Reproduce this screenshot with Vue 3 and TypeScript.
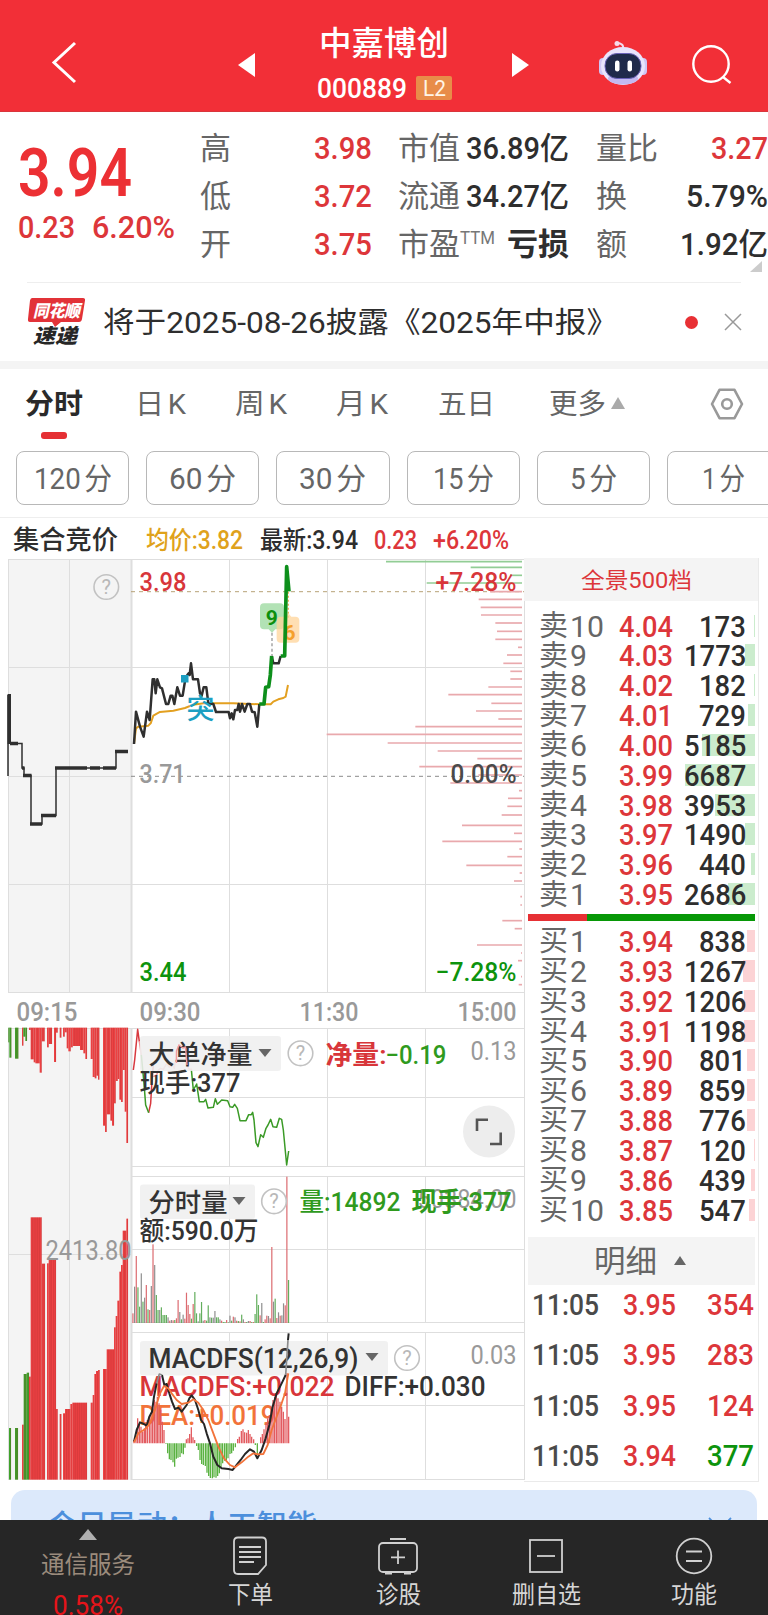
<script setup lang="ts">
import { h, type FunctionalComponent } from 'vue'

// Single-line label scaled to an exact advance width; colour comes from the parent.
const Fit: FunctionalComponent<{ t: string; w: number; s: number; b?: number }> = (p) =>
  h('svg', { width: p.w, height: p.s, style: 'display:block;overflow:visible;flex:none' }, [
    h('text', {
      x: 0, y: p.s * 0.86, textLength: p.w, lengthAdjust: 'spacingAndGlyphs',
      'font-size': p.s, 'font-weight': p.b ?? 400, fill: 'currentColor',
    }, p.t),
  ])
Fit.props = ['t', 'w', 's', 'b']

interface Cell { l: string; lw: number; sup?: string; v: string; vw: number; c: string; b?: number }
const quote: Cell[][] = [
  [
    { l: '高', lw: 31, v: '3.98', vw: 58, c: 'red' },
    { l: '低', lw: 31, v: '3.72', vw: 58, c: 'red' },
    { l: '开', lw: 31, v: '3.75', vw: 58, c: 'red' },
  ],
  [
    { l: '市值', lw: 62, v: '36.89亿', vw: 103, c: 'ink' },
    { l: '流通', lw: 62, v: '34.27亿', vw: 103, c: 'ink' },
    { l: '市盈', lw: 62, sup: 'TTM', v: '亏损', vw: 62, c: 'ink', b: 600 },
  ],
  [
    { l: '量比', lw: 62, v: '3.27', vw: 57, c: 'red' },
    { l: '换', lw: 31, v: '5.79%', vw: 82, c: 'ink' },
    { l: '额', lw: 31, v: '1.92亿', vw: 88, c: 'ink' },
  ],
]

const tabs = [
  { t: '分时', w: 58 }, { t: '日K', w: 51 }, { t: '周K', w: 52 },
  { t: '月K', w: 52 }, { t: '五日', w: 57 }, { t: '更多', w: 57 },
]
const periods = [
  { t: '120分', w: 78 }, { t: '60分', w: 67 }, { t: '30分', w: 67 },
  { t: '15分', w: 61 }, { t: '5分', w: 47 }, { t: '1分', w: 43 },
]

type Level = [string, string, string, number]
const asks: Level[] = [
  ['10', '4.04', '173', 1], ['9', '4.03', '1773', 10], ['8', '4.02', '182', 1], ['7', '4.01', '729', 7],
  ['6', '4.00', '5185', 53], ['5', '3.99', '6687', 70], ['4', '3.98', '3953', 40], ['3', '3.97', '1490', 10],
  ['2', '3.96', '440', 4], ['1', '3.95', '2686', 27],
]
const bids: Level[] = [
  ['1', '3.94', '838', 8], ['2', '3.93', '1267', 12], ['3', '3.92', '1206', 11], ['4', '3.91', '1198', 11],
  ['5', '3.90', '801', 8], ['6', '3.89', '859', 8], ['7', '3.88', '776', 8], ['8', '3.87', '120', 1],
  ['9', '3.86', '439', 4], ['10', '3.85', '547', 6],
]
const trades = [['3.95', '354', 'red'], ['3.95', '283', 'red'], ['3.95', '124', 'red'], ['3.94', '377', 'green']]

// Price distribution: [y, left]; every bar ends on the right edge.
const profile: [number, number][] = [
  [35, 378], [52, 632], [76, 750], [99, 500], [125, 690], [148, 656], [172, 662], [195, 663], [219, 706],
  [244, 711], [268, 706], [292, 774], [315, 741], [340, 730], [364, 751], [387, 751], [411, 685], [434, 565],
  [460, 694], [483, 648], [507, 715], [530, 466], [553, 200], [579, 383], [603, 533], [626, 652], [650, 478],
  [675, 655], [699, 571], [722, 777], [745, 744], [769, 742], [795, 725], [826, 606], [850, 762], [874, 547],
  [897, 778], [920, 742], [946, 619], [969, 779], [993, 762], [1040, 781], [1065, 781], [1112, 727],
  [1136, 764], [1185, 651], [1209, 783], [1232, 774], [1280, 783], [1304, 776],
]

type Range = [number, number, number, string]
const R = '#ee4244'
const G = '#3fa22c'
const hangBars: Range[] = [
  [25, 28, 187, G], [28, 34, 233, G], [45, 55, 236, G], [66, 70, 197, R], [70, 76, 170, G], [76, 81, 183, G],
  [87, 92, 150, R], [92, 101, 238, R], [101, 106, 247, R], [106, 119, 250, R], [119, 125, 278, R],
  [125, 134, 184, R], [141, 146, 202, R], [146, 156, 192, R], [162, 168, 246, R], [168, 173, 158, R],
  [179, 184, 173, R], [189, 194, 170, R], [194, 200, 157, R], [200, 205, 205, R], [205, 212, 214, R],
  [212, 218, 202, R], [218, 240, 198, R], [240, 250, 210, R], [250, 256, 220, R], [256, 261, 237, R],
  [272, 278, 237, R], [278, 284, 291, R], [284, 289, 295, R], [289, 294, 287, R], [294, 298, 299, R],
  [309, 315, 437, R], [315, 320, 456, R], [320, 331, 403, R], [331, 336, 422, R], [336, 342, 437, R],
  [342, 347, 370, R], [347, 353, 303, R], [353, 358, 297, R], [358, 363, 359, R], [363, 368, 366, R],
  [368, 374, 270, R], [374, 379, 395, R], [379, 384, 489, R],
]
const riseBars: Range[] = [
  [27, 33, 594, G], [45, 54, 594, G], [66, 71, 584, R], [71, 80, 432, G], [80, 87, 428, G], [87, 92, 440, R],
  [92, 125, -38, R], [125, 135, 101, R], [141, 146, 100, R], [146, 156, 90, R], [156, 168, 90, R], [168, 173, 537, R],
  [179, 184, 552, R], [189, 195, 550, R], [195, 211, 537, R], [211, 217, 522, R], [217, 261, 518, R],
  [272, 278, 518, R], [278, 283, 495, R], [283, 288, 432, R], [288, 294, 423, R], [294, 299, 420, R],
  [309, 320, 417, R], [320, 342, 358, R], [342, 347, 292, R], [347, 352, 258, R], [352, 358, 212, R],
  [358, 363, 125, R], [363, 368, 105, R], [368, 379, 2, R], [379, 384, -34, R],
]
// Edges drawn between neighbouring columns of one range.
const seams = (b: Range): number[] => {
  const n = Math.max(1, Math.round((b[1] - b[0]) / 5.3))
  return Array.from({ length: n }, (_, i) => b[0] + ((i + 1) * (b[1] - b[0])) / n)
}

const volTops = [
  '250r', '170k', '78r', '172g', '230g', '130k', '215g', '203k', '165r', '238g', '240r', '168k', '43r', '105k',
  '195g', '240g', '240k', '232g', '255g', '255g', '255g', '262k', '272r', '270k', '271r', '270g', '265r', '210r',
  '246k', '268g', '254k', '266r', '188r', '225r', '252r', '266g', '222r', '186g', '250g', '274k', '250g', '216g',
  '272k', '270r', '272g', '226g', '262k', '263g', '263k', '243k', '262g', '262g', '268k', '272r', '276g', '276g',
  '270r', '277g', '257k', '272g', '260r', '262k', '272r', '273g', '274r', '254g', '268k', '276r', '276g', '273k',
  '273r', '276g', '276r', '252g', '193g', '225g', '256r', '219k', '276g', '268r', '257r', '258k', '265r', '51r',
  '215k', '206g', '264r', '247k', '257r', '256k', '220k', '226r', '-160r', '150g',
]
const volBars = volTops.map((v, i) => ({ x: 397 + i * 5.02, y: parseInt(v), c: v.slice(-1) }))
const volFill: Record<string, string> = { r: '#dc6b70', g: '#63ae5d', k: '#8f8f8f' }

const macd: [number, number][] = [
  [402, 630], [408, 615], [413, 565], [418, 580], [423, 590], [428, 605], [433, 595], [437, 580], [442, 570],
  [448, 560], [453, 555], [458, 545], [463, 510], [468, 515], [472, 500], [477, 520], [482, 540], [487, 575],
  [492, 600], [498, 642], [503, 670], [508, 688], [513, 690], [519, 697], [524, 710], [529, 686], [534, 683],
  [540, 681], [545, 670], [550, 673], [555, 653], [559, 628], [564, 625], [569, 612], [574, 592], [579, 622],
  [584, 630], [590, 648], [595, 660], [600, 690], [605, 702], [610, 705], [616, 708], [621, 728], [626, 738],
  [631, 744], [637, 745], [642, 742], [648, 743], [653, 738], [658, 730], [663, 712], [668, 700], [674, 692],
  [679, 690], [684, 685], [690, 672], [695, 670], [700, 662], [706, 652], [713, 627], [718, 620], [724, 603],
  [729, 598], [734, 607], [740, 608], [745, 600], [750, 612], [755, 620], [761, 628], [766, 645], [772, 675],
  [782, 622], [787, 612], [792, 598], [798, 580], [803, 565], [808, 555], [813, 530], [819, 510], [824, 500],
  [829, 495], [834, 505], [840, 515], [845, 530], [850, 545], [855, 567], [861, 430], [866, 560],
]

// Chart labels: text, x, baseline, width, size, colour, weight.
type Label = [string, number, number, number, number, string, number]
const labels: Label[] = [
  ['3.98', 139, 590, 47, 26, '#d8363a', 500],
  ['+7.28%', 435, 590, 81, 26, '#d8363a', 500],
  ['3.71', 139, 782, 46, 26, '#999', 500],
  ['0.00%', 450, 782, 66, 26, '#4a4a4a', 500],
  ['3.44', 139, 980, 47, 26, '#0d930d', 500],
  ['−7.28%', 435, 980, 81, 26, '#0d930d', 500],
  ['09:15', 16, 1020.5, 61, 26, '#999', 500],
  ['09:30', 139, 1020.5, 61, 26, '#999', 500],
  ['11:30', 299, 1020.5, 59, 26, '#999', 500],
  ['15:00', 457, 1020.5, 59, 26, '#999', 500],
  ['大单净量', 148, 1063, 104, 26, '#333', 500],
  ['净量:', 325, 1063, 61, 26, '#d8363a', 600],
  ['−0.19', 385, 1063, 61, 26, '#2f9a1d', 500],
  ['0.13', 470, 1059, 46, 26, '#999', 400],
  ['现手:377', 139, 1091, 101, 26, '#333', 500],
  ['分时量', 148, 1211, 79, 26, '#333', 500],
  ['50384.00', 417, 1207, 99, 26, '#999', 400],
  ['量:14892', 299, 1210.5, 101, 26, '#2f9a1d', 500],
  ['现手:377', 411, 1210.5, 100, 26, '#2f9a1d', 600],
  ['额:590.0万', 139, 1239, 119, 26, '#333', 500],
  ['2413.80', 45, 1259.5, 86, 27, '#999', 400],
  ['MACDFS(12,26,9)', 148, 1367.5, 210, 27, '#333', 500],
  ['0.03', 470, 1363, 46, 26, '#999', 400],
  ['MACDFS:+0.022', 139, 1395.5, 195, 27, '#d8363a', 500],
  ['DIFF:+0.030', 344, 1395.5, 141, 27, '#333', 500],
  ['DEA:+0.019', 139, 1424, 136, 27, '#f2733a', 500],
]
const helps = [[106.3, 587], [300.5, 1053.3], [274, 1201.3], [407, 1358]]
const carets = [[265, 1049], [239, 1197], [372, 1353]]
const vlines = [229.5, 327.5, 425.5]
const panels = [[1028.5, 1097.5, 1166.5], [1176.5, 1249.5, 1322.5], [1332.5, 1405.5, 1479.5]]
</script>

<template>
  <div class="page">
    <header class="top">
      <svg class="back" width="28" height="44" viewBox="0 0 28 44"><path d="M25 3 4 22.500 25 42" /></svg>
      <svg class="prev" width="17" height="24" viewBox="0 0 17 24"><path d="M17 0V24L0 12Z" /></svg>
      <div class="title">
        <Fit t="中嘉博创" :w="130" :s="32.5" :b="500" />
        <div class="code">
          <Fit t="000889" :w="90" :s="28" :b="500" />
          <span class="chip"><Fit t="L2" :w="23" :s="22" /></span>
        </div>
      </div>
      <svg class="next" width="17" height="24" viewBox="0 0 17 24"><path d="M0 0V24L17 12Z" /></svg>
      <svg class="robot" width="48" height="46" viewBox="0 0 48 46">
        <path d="M24 9C25 5 22 3 18 3" fill="none" stroke="#f3dcef" stroke-width="2" />
        <circle cx="18" cy="3.500" r="2.500" fill="#f7d9e8" />
        <rect x="0" y="18" width="8" height="17" rx="4" fill="#cfc6f5" />
        <rect x="40" y="18" width="8" height="17" rx="4" fill="#cfc6f5" />
        <ellipse cx="24" cy="26" rx="22" ry="19" fill="#e9e4fc" />
        <ellipse cx="24" cy="38.500" rx="15" ry="6" fill="#c3b9f0" />
        <rect x="6" y="13.500" width="36" height="25" rx="12" fill="#1f2a4a" stroke="#6a62b8" stroke-width="1" />
        <rect x="16" y="20.500" width="4.500" height="11" rx="2.200" fill="#fff" />
        <rect x="28.500" y="20.500" width="4.500" height="11" rx="2.200" fill="#fff" />
      </svg>
      <svg class="search" width="42" height="42" viewBox="0 0 42 42"><circle cx="20" cy="20" r="17.700" /><path d="M32 33 39.500 39" /></svg>
    </header>

    <section class="quote">
      <div class="last red">
        <Fit t="3.94" :w="114" :s="66" :b="600" />
        <div class="delta"><Fit t="0.23" :w="57" :s="32" :b="500" /><Fit t="6.20%" :w="83" :s="32" :b="500" /></div>
      </div>
      <div v-for="(col, i) in quote" :key="i" class="qcol">
        <div v-for="c in col" :key="c.l" class="qrow">
          <span class="grey"><Fit :t="c.l" :w="c.lw" :s="31" /></span>
          <span v-if="c.sup" class="sup"><Fit :t="c.sup" :w="35" :s="18" /></span>
          <span class="qv" :class="c.c"><Fit :t="c.v" :w="c.vw" :s="31" :b="c.b ?? 500" /></span>
        </div>
      </div>
      <i class="corner"></i>
    </section>

    <section class="news">
      <svg width="60" height="50" viewBox="0 0 60 50">
        <path d="M5 1H56Q58.500 1 58 3.500L55 22Q54.500 25 52 25H34L28 30 25 25H3Q0.500 25 1 22L3 3.500Q3.500 1 5 1Z" fill="#e23238" />
        <text x="6" y="20" font-size="17" font-weight="900" font-style="italic" fill="#fff" textLength="47" lengthAdjust="spacingAndGlyphs">同花顺</text>
        <text x="6" y="45.500" font-size="20" font-weight="900" font-style="italic" fill="#262626" textLength="44" lengthAdjust="spacingAndGlyphs">速递</text>
      </svg>
      <span class="headline ink"><Fit t="将于2025-08-26披露《2025年中报》" :w="515" :s="29" /></span>
      <i class="dot"></i>
      <svg width="18" height="18" viewBox="0 0 18 18"><path d="M1 1 17 17M17 1 1 17" stroke="#999" stroke-width="1.500" /></svg>
    </section>

    <nav class="tabs">
      <div v-for="(t, i) in tabs" :key="t.t" class="tab" :class="{ on: i === 0 }">
        <Fit :t="t.t" :w="t.w" :s="28.5" :b="i === 0 ? 600 : 400" />
        <i v-if="i === 0" class="bar"></i>
        <i v-if="i === 5" class="up"></i>
      </div>
      <svg class="gear" width="34" height="32" viewBox="0 0 34 32">
        <path d="M9.500 1.800H24.500L32 16 24.500 30.200H9.500L2 16Z" stroke-linejoin="round" /><circle cx="17" cy="16" r="4.800" />
      </svg>
    </nav>

    <div class="periods">
      <div v-for="p in periods" :key="p.t" class="period"><Fit :t="p.t" :w="p.w" :s="30" /></div>
    </div>

    <div class="info">
      <span class="ink"><Fit t="集合竞价" :w="105" :s="26" :b="500" /></span>
      <span class="gold"><Fit t="均价:3.82" :w="97" :s="25" :b="500" /></span>
      <span class="ink"><Fit t="最新:3.94" :w="98" :s="25" :b="500" /></span>
      <span class="red"><Fit t="0.23" :w="43" :s="25" :b="500" /></span>
      <span class="red"><Fit t="+6.20%" :w="76" :s="25" :b="500" /></span>
    </div>

    <main class="body">
      <svg class="chart" width="528" height="924" viewBox="0 558 528 924">
        <rect x="8" y="559" width="123" height="434" fill="#f4f4f4" />
        <rect x="8" y="1028" width="123" height="452" fill="#f4f4f4" />
        <g stroke="#dedede" stroke-width="1" fill="none">
          <path d="M8 559.500H524.500M8 667.500H524.500M8 776.500H131M8 884.500H524.500M8 992.500H524.500M8.500 559V993M69.500 559V993M524.500 559V1480" />
          <path d="M131.500 559V993M131.500 1028V1480" stroke-width="2" />
          <path d="M8.500 1028V1480M69.500 1028V1480M8 1254.500H131M8 1028.500H131" />
          <path v-for="v in vlines" :key="v" :d="`M${v} 559V993M${v} 1028V1166M${v} 1176V1322M${v} 1332V1480`" />
          <path v-for="p in panels" :key="p[0]" :d="`M131 ${p[0]}H524.500M131 ${p[1]}H524.500M131 ${p[2]}H524.500`" />
        </g>
        <path d="M131 591.700H524" stroke="#b7a277" stroke-dasharray="4 4" />
        <path d="M131 776.300H524" stroke="#8a8a8a" stroke-dasharray="4 4" />

        <g transform="translate(260 550) scale(.33333)">
          <path v-for="(b, i) in profile" :key="b[0]" :d="`M${b[1]} ${b[0]}H786`" stroke-width="5" :stroke="i < 4 ? '#92cd95' : '#e9a9ad'" />
        </g>

        <g fill="none" stroke="#2f2f2f" stroke-width="1.500">
          <path d="M8 776V695M10 743.500H22V768H24V775.500H31V824H42V815.500H56V768H116V751.500H128" />
          <path d="M9.300 694V744M10 743.500H18M22 768H24.500M23 775.500H31.500M30 824H42M41 815.500H56M55 768H87M90 768H100M103 768H116M115 751.500H128" stroke-width="3.400" />
        </g>

        <g transform="translate(0 550) scale(.33333)" fill="none" stroke-linejoin="round">
          <path d="M402 582 408 535 415 530 445 527 452 520 460 497 480 486 520 482 555 474 580 464 610 460H700L780 463H812L820 455 835 448 850 444 857 440 864 405" stroke="#e3a020" stroke-width="6" />
          <path d="M402 582 408 485 420 530 431 560 441 485 449 510 458 388H463L467 430 472 388 480 412 486 415 498 462H505L512 437H517L523 462 532 412 540 437H548L556 387 562 375 566 370 569 375 573 340 579 388H594L600 430 605 437 611 412H619L625 460 640 462 648 486H686L690 505 695 490 700 508 705 480H712L716 462 720 485 726 462 734 485 742 462H750L756 485 764 487 772 530 778 462M815 318 820 340H836L842 318" stroke="#2f2f2f" stroke-width="7.500" />
          <path d="M865 125V205" stroke="#f3b060" stroke-width="4" stroke-dasharray="6 6" />
          <path d="M816 248V318" stroke="#9a9a9a" stroke-width="4" stroke-dasharray="9 7" />
          <path d="M792 160H840Q852 160 852 172V226Q852 238 840 238H826L816 248 806 238H792Q780 238 780 226V172Q780 160 792 160Z" fill="#aadfad" fill-opacity=".9" />
          <path d="M842 200H856L865 190 874 200H886Q898 200 898 212V266Q898 278 886 278H842Q830 278 830 266V212Q830 200 842 200Z" fill="#ffd49a" fill-opacity=".75" />
        </g>
        <text x="265.800" y="625" font-size="21" font-weight="700" fill="#0d8f0d">9</text>
        <text x="283.500" y="639.500" font-size="21" font-weight="700" fill="#f5a02c">6</text>
        <path transform="translate(0 550) scale(.33333)" d="M778 462H792L797 412 806 410 811 375 815 318M842 318H854L860 50 867 124" fill="none" stroke="#0d8f1b" stroke-width="11" stroke-linejoin="round" />
        <rect x="181" y="675" width="7.500" height="7.500" fill="#1c9fc2" />
        <text x="186.500" y="718.500" font-size="28" font-weight="500" fill="#1c9fc2">突</text>

        <g transform="translate(0 980) scale(.33333)">
          <template v-for="b in hangBars" :key="b[0]">
            <rect :x="b[0]" y="143" :width="b[1] - b[0]" :height="b[2] - 143" :fill="b[3]" />
            <path v-for="s in seams(b)" :key="s" :d="`M${s - 0.8} 143V${b[2]}`" stroke="#8a2020" stroke-opacity=".4" stroke-width="1.600" />
          </template>
          <g fill="none" stroke-width="4.500" stroke-linejoin="round">
            <path d="M400 270 404 240 413 148 418 185M446 398 452 370 456 300 460 255" stroke="#d8393f" />
            <path d="M424 225 432 310 437 375 446 398M574 268 580 330 590 312 598 365H612L617 358 624 384 640 382 646 356 652 373 660 365 665 360 683 362 690 380 698 382 704 373 712 385 720 422H738L746 404H754L758 397 762 420 768 488 774 500 782 464 790 472 798 445 804 435 812 418 819 440 830 442 838 415 845 418 850 450 860 555 866 513" stroke="#3a9a26" />
            <path d="M418 185 424 225M460 290 470 285 475 270 482 265 490 268 500 250 508 262 515 250 523 265 530 215 538 195 548 205 556 200 560 255 568 268H576" stroke="#f09a9d" />
          </g>
        </g>

        <g transform="translate(0 1230) scale(.33333)">
          <template v-for="b in riseBars" :key="b[0]">
            <rect :x="b[0]" :y="b[2]" :width="b[1] - b[0]" :height="749 - b[2]" :fill="b[3]" />
            <path v-for="s in seams(b)" :key="s" :d="`M${s - 0.8} ${b[2]}V749`" stroke="#8a2020" stroke-opacity=".4" stroke-width="1.600" />
          </template>
          <rect v-for="v in volBars" :key="v.x" :x="v.x" :y="v.y" width="3.600" :height="279 - v.y" :fill="volFill[v.c]" />
        </g>

        <g fill="#efefef" fill-opacity=".88">
          <rect x="140" y="1036" width="141" height="35" rx="3" />
          <rect x="140" y="1184.500" width="115" height="34.500" rx="3" />
          <rect x="140" y="1341" width="248" height="34.500" rx="3" />
        </g>
        <text v-for="(l, i) in labels" :key="i" :x="l[1] + 0.5" :y="l[2] + 0.5" :textLength="l[3]" lengthAdjust="spacingAndGlyphs" :font-size="l[4]" :fill="l[5]" :font-weight="l[6]">{{ l[0] }}</text>

        <path d="M176.500 1063V1051L179 1045 183 1048 185.500 1047 187 1065" fill="none" stroke="#f09a9d" stroke-width="1.400" />

        <g transform="translate(0 1230) scale(.33333)" fill="none" stroke-linejoin="round">
          <path v-for="m in macd" :key="m[0]" :d="`M${m[0]} 640V${m[1]}`" stroke-width="3.800" :stroke="m[1] < 640 ? '#e2575c' : '#55b03c'" />
          <path d="M402 635 410 600 420 577 428 580 440 587 448 560 456 545 462 500 470 460M486 435 493 465 500 462 508 490 516 515 525 537 535 533 545 545 560 525 568 505 575 496 585 510 595 540 603 570 612 582 620 610 630 640 640 680 652 705 665 715 685 717 698 720 710 705 722 690 735 672 750 658 762 665 772 685 785 660 797 625 808 585 818 530 830 490 845 460 857 435M864 330 866 310" stroke="#262626" stroke-width="6" />
          <path d="M470 460 478 432 486 435M857 435 864 330" stroke="#8c8c8c" stroke-width="5" />
          <path d="M402 637 415 610 435 598 450 580 465 540 480 490 492 468 505 475 515 490 530 510 545 522 565 518 580 508 595 518 610 540 625 570 640 610 655 650 672 685 690 705 705 712 725 697 745 680 760 670 775 673 790 672 803 645 815 600 830 560 845 520 855 490 865 430" stroke="#f2733a" stroke-width="5.500" />
        </g>

        <g v-for="q in helps" :key="q[1]">
          <circle :cx="q[0]" :cy="q[1]" r="12.300" fill="none" stroke="#c2c2c2" stroke-width="1.600" />
          <text :x="q[0]" :y="q[1] + 7" text-anchor="middle" font-size="20" fill="#b8b8b8">?</text>
        </g>
        <path v-for="c in carets" :key="c[1]" :d="`M${c[0] - 6.500} ${c[1]}h13l-6.500 8z`" fill="#666" />
        <circle cx="489" cy="1131.500" r="26" fill="#ededed" />
        <path d="M477 1131V1119.700H488M500.700 1132.500V1144H490" fill="none" stroke="#555" stroke-width="2.600" />
      </svg>

      <aside class="side">
        <div class="depth red"><Fit t="全景500档" :w="111" :s="22" /></div>
        <div class="book asks">
          <div v-for="r in asks" :key="r[1]" class="lvl">
            <i class="vol ask" :style="{ width: r[3] + 'px' }"></i>
            <span class="nm"><Fit t="卖" :w="29" :s="29" /><Fit :t="r[0]" :w="r[0].length * 17" :s="29.8" /></span>
            <span class="px red"><Fit :t="r[1]" :w="54" :s="29.8" :b="500" /></span>
            <span class="qty ink"><Fit :t="r[2]" :w="r[2].length * 15.6" :s="29.8" :b="500" /></span>
          </div>
        </div>
        <div class="ratio"><i></i></div>
        <div class="book bids">
          <div v-for="r in bids" :key="r[1]" class="lvl">
            <i class="vol bid" :style="{ width: r[3] + 'px' }"></i>
            <span class="nm"><Fit t="买" :w="29" :s="29" /><Fit :t="r[0]" :w="r[0].length * 17" :s="29.8" /></span>
            <span class="px red"><Fit :t="r[1]" :w="54" :s="29.8" :b="500" /></span>
            <span class="qty ink"><Fit :t="r[2]" :w="r[2].length * 15.6" :s="29.8" :b="500" /></span>
          </div>
        </div>
        <div class="detail"><Fit t="明细" :w="63" :s="31" /><i class="up dark"></i></div>
        <div v-for="(t, i) in trades" :key="i" class="trade">
          <span class="time"><Fit t="11:05" :w="67" :s="30" :b="500" /></span>
          <span class="tp red"><Fit :t="t[0]" :w="53" :s="30" :b="500" /></span>
          <span class="tq" :class="t[2]"><Fit :t="t[1]" :w="47" :s="30" :b="500" /></span>
        </div>
      </aside>
    </main>

    <div class="promo">
      <Fit t="今日异动：人工智能" :w="270" :s="28" :b="500" />
      <svg width="24" height="24" viewBox="0 0 24 24"><path d="M1 1 23 23M23 1 1 23" stroke="#4c8fdc" stroke-width="1.800" /></svg>
    </div>

    <footer class="bottom">
      <div class="sector">
        <i class="up"></i>
        <span class="brown"><Fit t="通信服务" :w="94" :s="24" /></span>
        <span class="pct"><Fit t="0.58%" :w="70" :s="27" /></span>
      </div>
      <div class="act">
        <svg width="40" height="40" viewBox="0 0 40 40"><path d="M8 1.500H32Q36 1.500 36 5.500V29L28 38H8Q4 38 4 34V5.500Q4 1.500 8 1.500ZM9 11H31M9 16H31M9 21H31M9 26H24" /></svg>
        <Fit t="下单" :w="45" :s="24" />
      </div>
      <div class="act">
        <svg width="40" height="40" viewBox="0 0 40 40"><rect x="1" y="7" width="38" height="29" rx="4" /><path d="M12 3H28M20 14.500V28M13 21.300H27M7 37.500H14M26 37.500H33" /></svg>
        <Fit t="诊股" :w="45" :s="24" />
      </div>
      <div class="act">
        <svg width="40" height="40" viewBox="0 0 40 40"><rect x="4" y="4" width="32" height="32" /><path d="M11 20H29" /></svg>
        <Fit t="删自选" :w="69" :s="24" />
      </div>
      <div class="act">
        <svg width="40" height="40" viewBox="0 0 40 40"><circle cx="20" cy="20" r="17.300" /><path d="M12 15.500H28M12 25H28" /></svg>
        <Fit t="功能" :w="46" :s="24" />
      </div>
    </footer>
  </div>
</template>

<style scoped>
.page {
  width: 768px;
  height: 1615px;
  overflow: hidden;
  background: #fff;
  display: flex;
  flex-direction: column;
  font-family: Roboto, 'Noto Sans CJK SC', sans-serif;
}
.page > * { flex: none; box-sizing: border-box; }
i { display: block; flex: none; }
.red { color: #dd363a; }
.green { color: #0d930d; }
.ink { color: #2e2e2e; }
.grey { color: #666; }
.gold { color: #dfa21c; }

.top { height: 112px; background: #f22f37; border-bottom: 1px solid #d9363c; color: #fff; display: flex; align-items: flex-start; }
.top > svg { flex: none; }
.back { margin: 40px 0 0 50px; fill: none; stroke: #fff; stroke-width: 3; }
.prev { margin: 53px 0 0 160px; fill: #fff; }
.title { margin: 27px 0 0 64px; width: 134px; }
.code { display: flex; align-items: center; margin-top: 16px; height: 24px; margin-left: -2px; }
.chip { margin-left: 9px; width: 36px; height: 24px; border-radius: 2px; background: #e88c49; color: #fff4e6; display: flex; align-items: center; justify-content: center; }
.next { margin: 53px 0 0 59px; fill: #fff; }
.robot { margin: 40px 0 0 70px; }
.search { margin: 44px 0 0 44px; fill: none; stroke: #fff; stroke-width: 2.4; }

.quote { position: relative; height: 170px; display: flex; padding-top: 11px; }
.last { width: 182px; padding-left: 18px; padding-top: 16px; flex: none; }
.delta { display: flex; gap: 17px; margin-top: 5px; }
.last > svg { color: #ec3034; }
.qcol { flex: none; width: 171.500px; margin-right: 26.500px; }
.qcol:nth-of-type(3) { width: 171px; }
.qcol:last-of-type { width: 172px; margin-right: 0; }
.qrow { height: 48px; display: flex; align-items: center; }
.sup { align-self: flex-start; margin-top: 10px; color: #777; }
.qv { margin-left: auto; }
.corner { position: absolute; right: 6px; top: 149px; border-left: 12px solid transparent; border-bottom: 11px solid #ccc; }

.news { height: 79px; margin: 0 27px; border-top: 1px solid #eee; display: flex; align-items: center; }
.news > svg { flex: none; }
.headline { margin-left: 16px; }
.dot { width: 13px; height: 13px; border-radius: 50%; background: #e83034; margin-left: 67px; margin-right: 26px; }

.tabs { height: 90px; border-top: 8px solid #f4f4f4; display: flex; align-items: flex-start; padding: 20px 0 0 25px; color: #666; text-autospace: normal; }
.tab { position: relative; display: flex; align-items: center; margin-right: 49px; }
.tab.on { color: #2a2a2a; margin-right: 52px; }
.tab:nth-child(4) { margin-right: 50px; }
.tab:nth-child(5) { margin-right: 54px; }
.tab:nth-child(6) { margin-right: 0; }
.bar { position: absolute; left: 16px; top: 43px; width: 26px; height: 7px; border-radius: 3px; background: #e53034; }
.up { border-left: 7px solid transparent; border-right: 7px solid transparent; border-bottom: 12px solid #aaa; margin-left: 5px; }
.gear { margin-left: auto; margin-right: 24px; margin-top: -1px; fill: none; stroke: #999; stroke-width: 2.6; }

.periods { display: flex; height: 67px; padding-left: 16px; gap: 17px; border-bottom: 1px solid #eee; overflow: hidden; text-autospace: normal; }
.period { flex: none; box-sizing: border-box; width: 113.2px; height: 54px; border: 1px solid #b8b8b8; border-radius: 8px; color: #666; display: flex; align-items: center; justify-content: center; }

.info { height: 40px; display: flex; align-items: center; padding: 3px 0 0 13px; }
.info .gold { margin-left: 28px; }
.info .gold + .ink { margin-left: 17px; }
.info .red { margin-left: 16px; }

.body { height: 924px; display: flex; }
.chart { display: block; flex: none; width: 528px; margin-right: -4px; }
.side { box-sizing: border-box; width: 235px; border: 1px solid #eaeaea; border-left: 0; border-top: 0; height: 924px; }
.depth { height: 43px; background: #f4f4f4; display: flex; align-items: center; padding-left: 57px; }
.book { display: flex; flex-direction: column; }
.asks { margin-top: 9.500px; height: 298.500px; }
.bids { margin-top: 5px; height: 298.500px; }
.lvl { position: relative; flex: none; height: 29.850px; display: flex; align-items: center; padding-left: 15px; }
.vol { position: absolute; right: 3px; top: 4px; height: 22px; }
.ask { background: #cbeccd; }
.bid { background: #fcd3d5; }
.nm { display: flex; align-items: center; gap: 2px; color: #666; width: 80px; position: relative; }
.px { position: relative; }
.qty { position: relative; margin-left: auto; padding-right: 12px; }
.ratio { height: 7px; width: 227px; margin: 5px 0 0 4px; background: #079807; }
.ratio i { width: 59px; height: 7px; background: #e63034; }
.detail { margin: 12px 0 0 4px; width: 227px; height: 48px; background: #f4f4f4; color: #666; display: flex; align-items: center; box-sizing: border-box; padding-left: 66px; }
.up.dark { border-left-width: 6px; border-right-width: 6px; border-bottom: 9px solid #666; margin-left: 17px; }
.trade { height: 50.500px; display: flex; align-items: center; padding-left: 8px; position: relative; top: -6px; }
.time { color: #4a4a4a; width: 91px; }
.tq { margin-left: auto; padding-right: 4px; }

.promo { height: 30px; margin: 8px 11px 0; border-radius: 14px 14px 0 0; background: #dce9fb; color: #4c8fdc; overflow: hidden; display: flex; align-items: flex-start; justify-content: space-between; padding: 21px 25px 0 36px; }
.promo > svg:last-child { flex: none; margin-top: 6px; }

.bottom { height: 95px; background: #262626; color: #d6d6d6; display: flex; overflow: hidden; }
.sector { width: 176px; display: flex; flex-direction: column; align-items: center; padding-top: 9px; }
.sector .up { border-left-width: 9px; border-right-width: 9px; border-bottom: 11px solid #b0b0b0; margin: 0; }
.brown { color: #9b8b7c; margin-top: 12px; }
.pct { color: #e5141a; margin-top: 16px; }
.act { width: 148px; display: flex; flex-direction: column; align-items: center; padding-top: 16px; gap: 6px; }
.act > svg:first-child { fill: none; stroke: #d0d0d0; stroke-width: 1.800; }
</style>
